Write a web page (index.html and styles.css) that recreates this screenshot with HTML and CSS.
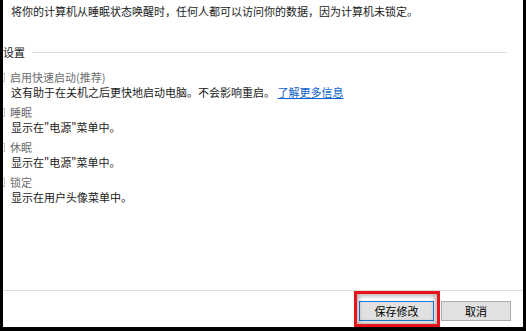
FILE: index.html
```html
<!DOCTYPE html>
<html lang="zh-CN">
<head>
<meta charset="utf-8">
<title>系统设置</title>
<link rel="stylesheet" href="styles.css">
</head>
<body>
<div class="window">
  <div class="content">
    <p class="intro">将你的计算机从睡眠状态唤醒时，任何人都可以访问你的数据，因为计算机未锁定。</p>
    <div class="group-head">
      <span class="group-title">设置</span>
      <span class="group-line"></span>
    </div>
    <div class="item">
      <div class="item-label"><span class="check"></span>启用快速启动(推荐)</div>
      <div class="item-desc">这有助于在关机之后更快地启动电脑。不会影响重启。 <a class="link" href="#">了解更多信息</a></div>
    </div>
    <div class="item">
      <div class="item-label"><span class="check"></span>睡眠</div>
      <div class="item-desc">显示在"电源"菜单中。</div>
    </div>
    <div class="item">
      <div class="item-label"><span class="check"></span>休眠</div>
      <div class="item-desc">显示在"电源"菜单中。</div>
    </div>
    <div class="item">
      <div class="item-label"><span class="check"></span>锁定</div>
      <div class="item-desc">显示在用户头像菜单中。</div>
    </div>
  </div>
  <div class="footer">
    <button class="btn btn-primary">保存修改</button>
    <button class="btn">取消</button>
  </div>
  <div class="highlight"></div>
</div>
</body>
</html>
```

FILE: styles.css
```css
html, body {
  margin: 0;
  padding: 0;
  background: #000;
  width: 526px;
  height: 331px;
  overflow: hidden;
}

body {
  font-family: "Noto Sans CJK SC", "Noto Sans", sans-serif;
  font-size: 11px;
  color: #000;
}

.window {
  position: relative;
  margin: 0 3px 0 3px;
  height: 327px;
  background: #fff;
  display: flex;
  flex-direction: column;
  overflow: hidden;
}

.content {
  padding: 4px 0 0 8px;
  flex: 1;
}

.intro {
  margin: 0;
  line-height: 15px;
  color: #1a1a1a;
}

.group-head {
  display: flex;
  align-items: center;
  margin: 26px 16px 0 -8px;
  line-height: 15px;
}

.group-title {
  color: #1a1a1a;
}

.group-line {
  flex: 1;
  height: 1px;
  background: #dcdcdc;
  margin-left: 7px;
}

.item {
  margin-top: 5px;
}

.group-head + .item {
  margin-top: 10px;
}

.item-label {
  display: flex;
  align-items: center;
  line-height: 15px;
  color: #6d6d6d;
}

.check {
  width: 9px;
  height: 9px;
  box-sizing: border-box;
  border: 1px solid #c4c4c4;
  background: #fff;
  margin-left: -15px;
  margin-right: 5px;
  flex: none;
}

.item-desc {
  line-height: 15px;
  color: #1a1a1a;
}

.link {
  color: #0a62c8;
  text-decoration: underline;
}

.footer {
  height: 37px;
  border-top: 1px solid #dcdcdc;
  display: flex;
  justify-content: flex-end;
  align-items: flex-start;
  padding: 10px 12px 0 0;
  box-sizing: border-box;
  gap: 7px;
}

.btn {
  font-family: "Noto Sans CJK SC", "Noto Sans", sans-serif;
  font-size: 11px;
  color: #000;
  height: 20px;
  width: 70px;
  padding: 0;
  line-height: 18px;
  background: #e1e1e1;
  border: 1px solid #adadad;
  border-radius: 0;
}

.btn-primary {
  width: 75px;
  border-color: #1c7bd6;
}

.highlight {
  position: absolute;
  left: 351px;
  top: 291px;
  width: 86px;
  height: 36px;
  box-sizing: border-box;
  border: 3px solid #e8141b;
  box-shadow: inset 0 0 4px 2px rgba(0, 0, 0, 0.3);
  pointer-events: none;
}
```
